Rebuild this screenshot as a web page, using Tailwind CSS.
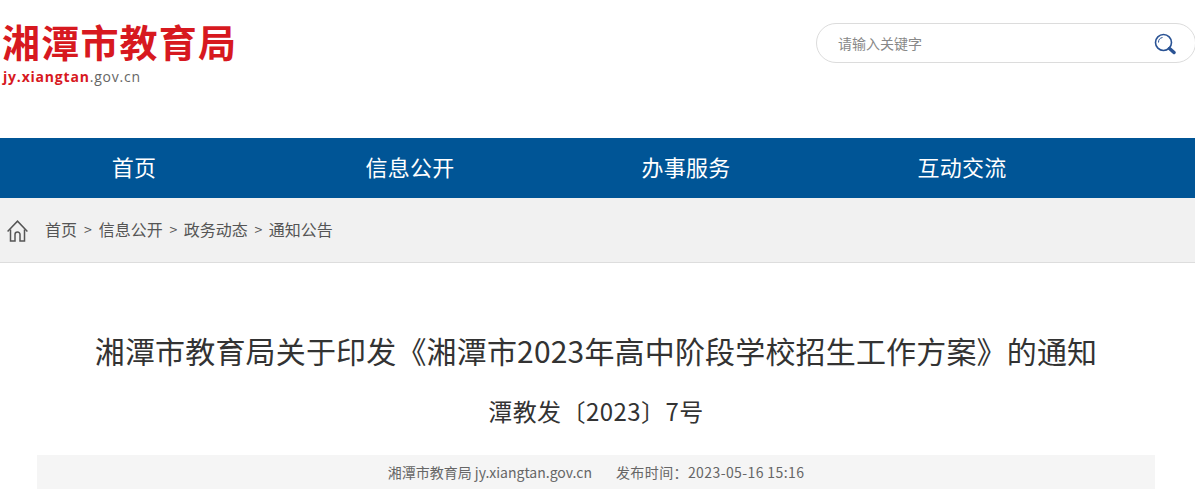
<!DOCTYPE html>
<html lang="zh-CN">
  <head>
    <meta charset="UTF-8" />
    <title>湘潭市教育局</title>
    <script src="https://cdn.jsdelivr.net/npm/@tailwindcss/browser@4"></script>
  </head>
  <body class="bg-white h-[489px] overflow-hidden font-['Noto_Sans_CJK_SC',sans-serif] text-[#333]">
    <!-- header -->
    <header class="h-[138px] flex justify-between items-start">
      <div class="pl-[2px] pt-[19px]">
        <div class="text-[38px] leading-[44px] tracking-[1.2px] font-bold text-[#d7191f]">湘潭市教育局</div>
        <div class="mt-[4px] pl-[1px] text-[14px] leading-[20px] tracking-[0.8px] font-['Open_Sans',sans-serif] text-[#666]"><span class="font-bold text-[#d7191f]">jy.xiangtan</span>.gov.cn</div>
      </div>
      <div class="mt-[23px] w-[380px] h-[40px] -mr-[1px] border border-[#dcdcdc] rounded-[20px] flex items-center justify-between pl-[21px] pr-[19px]">
        <span class="text-[14px] leading-[20px] text-[#888]">请输入关键字</span>
        <svg class="w-[22px] h-[22px] mt-[2px]" viewBox="0 0 22 22" fill="none">
          <circle cx="9.5" cy="9.5" r="8" stroke="#2a5394" stroke-width="1.6" />
          <path d="M4.5 9.5a5 5 0 0 1 4-5" stroke="#2a5394" stroke-width="1" />
          <path d="M15.5 15.5l4.5 4" stroke="#2a5394" stroke-width="3.4" stroke-linecap="round" />
        </svg>
      </div>
    </header>

    <!-- nav -->
    <nav class="h-[60px] bg-[#005596] flex text-white text-[22px] leading-[57px] tracking-[0.2px]">
      <a class="-ml-[4px] w-[276px] text-center">首页</a>
      <a class="w-[276px] text-center">信息公开</a>
      <a class="w-[276px] text-center">办事服务</a>
      <a class="w-[276px] text-center">互动交流</a>
    </nav>

    <!-- breadcrumb -->
    <div class="h-[65px] bg-[#f1f1f1] border-b border-[#dddddd] flex items-center pl-[7px] text-[16px] leading-[22px] text-[#555]">
      <svg class="w-[21px] h-[22px] mr-[17px] mt-[2px]" viewBox="0 0 21 22" fill="none" stroke="#555" stroke-width="1.5">
        <path d="M0.6 11.5L10.5 1.2l9.9 10.3" />
        <path d="M3.5 9.5V21h4.5v-6.5a2.5 2.5 0 0 1 5 0V21h4.5V9.5" />
      </svg>
      <span class="-mt-[2px]">首页</span>
      <span class="mx-[7px] text-[14px] -mt-[2px]">&gt;</span>
      <span class="-mt-[2px]">信息公开</span>
      <span class="mx-[6.6px] text-[14px] -mt-[2px]">&gt;</span>
      <span class="-mt-[2px]">政务动态</span>
      <span class="mx-[6.6px] text-[14px] -mt-[2px]">&gt;</span>
      <span class="-mt-[2px]">通知公告</span>
    </div>

    <!-- article head -->
    <main class="px-[37px] pr-[40px]">
      <h1 class="mt-[63px] text-center text-[30px] leading-[48px] tracking-[0.17px] whitespace-nowrap">湘潭市教育局关于印发《湘潭市2023年高中阶段学校招生工作方案》的通知</h1>
      <h2 class="mt-[19px] text-center text-[24px] leading-[36px] tracking-[0.45px]">潭教发〔2023〕7号</h2>
      <div class="mt-[26px] h-[40px] bg-[#f5f5f5] text-center text-[14px] leading-[34px] text-[#666]">
        <span>湘潭市教育局 jy.xiangtan.gov.cn</span><span class="ml-[24px] tracking-[0.4px]">发布时间：2023-05-16 15:16</span>
      </div>
    </main>
  </body>
</html>
